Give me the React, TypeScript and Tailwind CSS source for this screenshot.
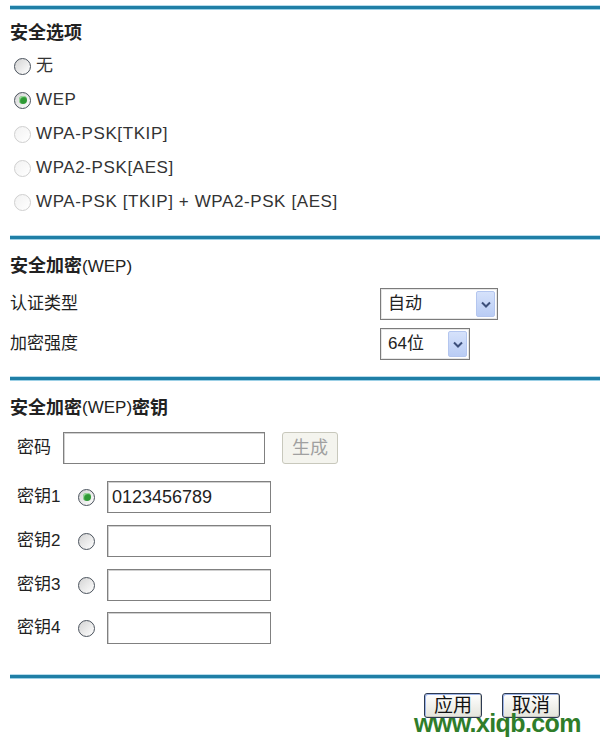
import React from "react";

const FONT = { fontFamily: '"Liberation Sans", "Noto Sans CJK SC", Arial, sans-serif' };

function Rule({ className = "" }: { className?: string }) {
  return (
    <div className={`ml-[10px] h-[3px] bg-[#1f7fa6] shadow-[0_1px_0_#9cd0e6,0_-1px_0_#b8dcec] ${className}`} />
  );
}

function Radio({ checked = false, disabled = false }: { checked?: boolean; disabled?: boolean }) {
  return (
    <span
      className={`inline-flex size-[17px] shrink-0 items-center justify-center rounded-full border bg-linear-to-br ${
        disabled
          ? "border-[#cfcfcf] from-[#f2f2f2] to-white"
          : "border-[#4a525c] from-[#d4d4d4] to-white"
      }`}
    >
      {checked && (
        <span className="size-[8px] rounded-full bg-[#2f9a35] shadow-[inset_1px_1px_1px_#a8e0a8]" />
      )}
    </span>
  );
}

function Select({ value, width }: { value: string; width: string }) {
  return (
    <div
      className={`flex h-[32px] items-center justify-between border border-[#7b7b7b] bg-white pl-[7px] pr-[2px] shadow-[inset_0_0_0_1px_#e6e6e6] ${width}`}
    >
      <span className="text-[17px] text-[#222]">{value}</span>
      <span className="flex h-[26px] w-[19px] items-center justify-center rounded-[2px] border border-[#b4c6ef] bg-linear-to-b from-[#d6e2fb] to-[#b9ccf4]">
        <svg width="10" height="7" viewBox="0 0 10 7">
          <path d="M1 1.5 L5 5.5 L9 1.5" fill="none" stroke="#3c4f7a" strokeWidth="2" />
        </svg>
      </span>
    </div>
  );
}

function TextBox({ width, value = "" }: { width: string; value?: string }) {
  return (
    <div
      className={`flex h-[32px] items-center border border-[#808080] bg-white px-[4px] text-[18px] text-[#222] shadow-[inset_1px_1px_0_#d0d0d0] ${width}`}
    >
      {value}
    </div>
  );
}

function XpButton({ children }: { children: React.ReactNode }) {
  return (
    <button className="flex h-[25px] w-[58px] items-center justify-center rounded-[3px] border border-[#2d3a52] bg-linear-to-b from-white to-[#e4e4dc] text-[19px] leading-none text-[#111] shadow-[inset_-1px_-1px_0_#c9c9c0,inset_1px_1px_0_#9db4e8]">
      {children}
    </button>
  );
}

const modes = [
  { label: "无", checked: false, disabled: false },
  { label: "WEP", checked: true, disabled: false },
  { label: "WPA-PSK[TKIP]", checked: false, disabled: true },
  { label: "WPA2-PSK[AES]", checked: false, disabled: true },
  { label: "WPA-PSK [TKIP] + WPA2-PSK [AES]", checked: false, disabled: true },
];

const keys = [
  { label: "密钥1", checked: true, value: "0123456789", mt: "mt-[17px]" },
  { label: "密钥2", checked: false, value: "", mt: "mt-[12px]" },
  { label: "密钥3", checked: false, value: "", mt: "mt-[12px]" },
  { label: "密钥4", checked: false, value: "", mt: "mt-[11px]" },
];

export default function App() {
  return (
    <div className="relative h-[740px] w-[600px] overflow-hidden bg-white pt-[6px] text-[#222]" style={FONT}>
      <Rule />

      {/* 安全选项 */}
      <div className="flex h-[40px] items-center pl-[10px] pt-[8px] text-[18px] font-bold">安全选项</div>
      {modes.map((m) => (
        <div key={m.label} className="flex h-[34px] items-center gap-[5px] pl-[14px]">
          <Radio checked={m.checked} disabled={m.disabled} />
          <span className="text-[17px] tracking-[0.6px] text-[#333]">{m.label}</span>
        </div>
      ))}

      <Rule className="mt-[17px]" />

      {/* 安全加密(WEP) */}
      <div className="flex h-[49px] items-center pl-[10px] pt-[6px] text-[18px]">
        <span className="font-bold">安全加密</span>
        <span className="text-[17px]">(WEP)</span>
      </div>
      <div className="flex h-[32px] items-center pl-[10px]">
        <span className="w-[370px] text-[17px]">认证类型</span>
        <Select value="自动" width="w-[118px]" />
      </div>
      <div className="mt-[8px] flex h-[32px] items-center pl-[10px]">
        <span className="w-[370px] text-[17px]">加密强度</span>
        <Select value="64位" width="w-[90px]" />
      </div>

      <Rule className="mt-[17px]" />

      {/* 安全加密(WEP)密钥 */}
      <div className="flex h-[44px] items-center pl-[10px] pt-[12px] text-[18px]">
        <span className="font-bold">安全加密</span>
        <span className="text-[17px]">(WEP)</span>
        <span className="font-bold">密钥</span>
      </div>
      <div className="mt-[8px] flex h-[32px] items-center pl-[17px]">
        <span className="w-[46px] text-[17px]">密码</span>
        <TextBox width="w-[202px]" />
        <span className="ml-[17px] flex h-[32px] w-[56px] items-center justify-center rounded-[3px] border border-[#c8c8bc] bg-[#f4f4ee] text-[18px] text-[#a0a0a0]">
          生成
        </span>
      </div>
      {keys.map((k) => (
        <div key={k.label} className={`flex h-[32px] items-center pl-[17px] ${k.mt}`}>
          <span className="w-[61px] text-[17px]">{k.label}</span>
          <Radio checked={k.checked} />
          <span className="w-[12px]" />
          <TextBox width="w-[164px]" value={k.value} />
        </div>
      ))}

      <Rule className="mt-[31px]" />

      <div className="mt-[15px] flex justify-end gap-[20px] pr-[40px]">
        <XpButton>应用</XpButton>
        <XpButton>取消</XpButton>
      </div>

      <div className="absolute left-[414px] top-[708px] text-[25px] leading-[30px] font-bold tracking-[-0.6px] text-[#2f7d2a]">
        www.xiqb.com
      </div>
    </div>
  );
}
